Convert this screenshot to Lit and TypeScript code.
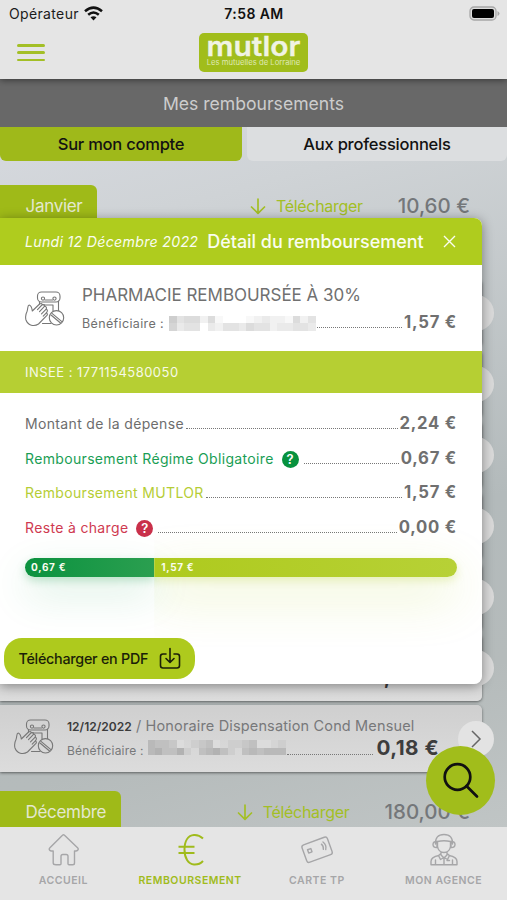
import { LitElement, html, css, svg } from "lit";
import { customElement, property } from "lit/decorators.js";

const pharmacyIcon = svg`
  <rect x="12.500" y="2" width="22.500" height="10" rx="4"/>
  <path d="M14.500 12v2M33.500 11v9.500M18 15h10v6"/>
  <circle cx="18" cy="8.600" r="1.600"/><circle cx="29.500" cy="8.600" r="1.600"/>
  <path d="M20 10h7.500M17.500 33.500h8.500"/>
  <path d="M7.300 21C7 18.500 6.200 15.500 4.200 15 2.200 15.500 3.200 18.500 2 21.500.5 24.500.3 27.500 1 30c2 5.500 8 7 12.500 4l8.200-8.300q1.500-2-.3-2.800l.5-.8q1.200-2.100-.7-3 .9-2.200-1.500-2.900.2-2-2.300-1.700-.9-1.800-2.800-.5z"/>
  <path d="M17.400 14.500l-4.900 5.200M19.700 16.200l-5.200 5.500M21.200 19.100l-4.700 4.800M21.400 22.900l-3.200 3.200"/>
  <circle cx="31.500" cy="27.800" r="7.200"/>
  <path d="M27 23.400l9.600 8M26 25l9.500 8"/>`;

@customElement("mosaic-strip")
class MosaicStrip extends LitElement {
  @property({ attribute: false }) shades: string[] = [];
  @property({ type: Number }) width = 147;
  static styles = css`
    :host { display: block; flex: none; }
    .grid { display: flex; flex-direction: column; height: 15px; }
    .line { display: flex; flex: 1; }
    .cell { flex: 1; }
  `;
  render() {
    return html`<div class="grid" style="width:${this.width}px">
      ${this.shades.map((row) => html`<div class="line">
        ${[...row].map((c) => {
          const v = parseInt(c, 16) * 7 + 150;
          return html`<div class="cell" style="background:${c === "." ? "transparent" : `rgb(${v},${v},${v})`}"></div>`;
        })}
      </div>`)}
    </div>`;
  }
}

@customElement("nav-tab")
class NavTab extends LitElement {
  @property() label = "";
  @property() icon = "";
  @property({ type: Boolean, reflect: true }) active = false;
  static styles = css`
    :host { display: flex; flex: 1; flex-direction: column; align-items: center; color: #a6a6a8; padding-top: 5px; }
    :host([active]) { color: #a0bb1c; }
    svg { width: 36px; height: 36px; fill: none; stroke: currentColor; stroke-width: 1.400; stroke-linecap: round; stroke-linejoin: round; }
    .label { font-size: 10.500px; font-weight: 600; letter-spacing: 0.520px; line-height: 14px; margin-top: 6px; white-space: nowrap; }
  `;
  glyph() {
    switch (this.icon) {
      case "home":
        return svg`<path d="M17.500 3.200q1-.9 2 0L32.800 16q1 1 .1 2-.9 1-2 1h-1.400v12q0 1.800-1.800 1.800h-3.700q-1 0-1-1v-7.500q0-1.800-1.800-1.800h-3.400q-1.800 0-1.800 1.800v7.500q0 1-1 1h-4Q8.200 32.800 8.200 31V19H6.500q-1.200 0-2-1-.8-1 .2-2z"/>`;
      case "euro":
        return svg`<path stroke-width="2" stroke-linecap="butt" d="M31 6.500C28 3.700 25 2.800 22 3c-6 .4-9.500 6-9.500 14.800S16.500 32 22 32.500c3.500.2 6.500-.8 9-3.500M6.500 14.700h16M6.500 21h16"/>`;
      case "card":
        return svg`<g transform="rotate(-20 18 17.500)"><rect x="4.500" y="8.500" width="27" height="18.500" rx="2.500"/><path d="M9 14.500h3.500V18H9zM24 14q1.500 2.500 0 5.500M26.200 12.500q2.600 4 0 8"/></g>`;
      default:
        return svg`<path d="M9.500 12q-.5-9.500 8.500-9.500T26.500 12M11.500 9.500q6.500-1.500 13 0M11.500 10v4.500q1 6 6.500 6t6.500-6V10M11 9.500q-4-.2-4 3t4 3zM25 9.500q4-.2 4 3t-4 3zM15 20v3l3 3 3-3v-3M15 21.500l-2.500 2 2 4 3.500-2 3.500 2 2-4-2.500-2M13 23.500q-8 1.500-8 6v3.200h26v-3.200q0-4.500-8-6M18 26v6.500M9.500 28v4.500M26.500 28v4.500M21 28.500h2.500"/>`;
    }
  }
  render() {
    return html`<svg viewBox="0 0 36 36">${this.glyph()}</svg><span class="label">${this.label}</span>`;
  }
}

@customElement("amount-row")
class AmountRow extends LitElement {
  @property() label = "";
  @property() value = "";
  @property() tone = "plain";
  @property({ type: Boolean }) help = false;
  static styles = css`
    :host { display: block; height: 34.700px; }
    .row { display: flex; align-items: baseline; line-height: 20px; }
    .label { font-size: 14px; letter-spacing: 0.340px; white-space: nowrap; }
    .plain { color: #6d6d6d; }
    .green { color: #1a9e55; }
    .lime { color: #b5cd35; }
    .red { color: #cf3a50; }
    .badge { width: 17px; height: 17px; margin-left: 8px; border-radius: 50%; color: #fff; font-size: 13px; font-weight: 600; line-height: 17px; text-align: center; }
    .badge.green { background: #07923e; color: #fff; }
    .badge.red { background: #c9304a; color: #fff; }
    .leader { flex: 1; border-bottom: 1px dotted #777; margin: 0 2px; }
    .help + .leader { margin-left: 5px; }
    .value { font-size: 16.700px; font-weight: 700; letter-spacing: 0.750px; color: #707070; }
  `;
  render() {
    return html`<div class="row">
      <span class="label ${this.tone}">${this.label}</span>
      ${this.help ? html`<span class="badge help ${this.tone}">?</span>` : ""}
      <span class="leader"></span><span class="value">${this.value}</span>
    </div>`;
  }
}

@customElement("month-header")
class MonthHeader extends LitElement {
  @property() month = "";
  @property() total = "";
  static styles = css`
    :host { display: flex; height: 40px; width: 470px; align-items: center; }
    .tag { display: flex; align-items: center; height: 40px; box-sizing: border-box; padding: 2px 15px 0 25.500px; background: #9fba18; border-radius: 0 6px 0 0; color: #e4e8d0; font-size: 17px; letter-spacing: -0.300px; }
    .dl { display: flex; align-items: center; gap: 9.500px; margin-left: auto; padding-top: 1px; color: #a3bf25; font-size: 16px; letter-spacing: -0.300px; }
    svg { width: 16px; height: 18px; fill: none; stroke: currentColor; stroke-width: 1.700; stroke-linecap: round; stroke-linejoin: round; }
    .total { margin-left: 35px; padding-top: 1px; color: #74777a; font-size: 20.500px; font-weight: 500; }
  `;
  render() {
    return html`<div class="tag">${this.month}</div>
      <div class="dl"><svg viewBox="0 0 16 18"><path d="M8 2v14M1.500 10L8 16.300 14.500 10"/></svg><span>Télécharger</span></div>
      <div class="total">${this.total}</div>`;
  }
}

@customElement("app-root")
class AppRoot extends LitElement {
  static styles = css`
    :host { display: block; font-family: Inter, "Liberation Sans", sans-serif; }
    .screen { position: relative; display: flex; flex-direction: column; width: 507px; height: 900px; overflow: hidden; background: #c4c9cb; }
    .top { position: relative; z-index: 1; height: 79px; flex: none; background: #e5e5e5; box-shadow: 0 1px 7px rgba(0,0,0,.5); }
    .status { display: grid; grid-template-columns: 1fr auto 1fr; align-items: center; height: 28px; padding: 0 7px 0 9px; font-size: 14px; color: #1b1b1b; }
    .carrier { display: flex; align-items: center; gap: 5px; letter-spacing: 0.350px; }
    .carrier, .time { margin-top: -1px; }
    .wifi { width: 19px; height: 15px; margin-top: -1px; }
    .time { font-weight: 600; color: #111; letter-spacing: 0.400px; padding-right: 1px; }
    .battery { justify-self: end; width: 31px; height: 15px; margin-top: -2px; }
    .brand { display: grid; grid-template-columns: 1fr auto 1fr; align-items: start; padding: 5px 17px 0 17px; }
    .burger { display: flex; flex-direction: column; gap: 4.500px; width: 28px; padding-top: 11px; }
    .burger i { height: 2.800px; border-radius: 2px; background: #a3bf26; }
    .logo { width: 109px; height: 39px; border-radius: 5px; background: #a1bd1b; color: #f0f3e4; text-align: center; white-space: nowrap; }
    .word { display: block; font-size: 26.500px; font-weight: 600; line-height: 24px; height: 24px; padding-top: 1px; transform: scaleX(1.130); -webkit-text-stroke: 0.300px #f0f3e4; stroke-linejoin: round; }
    .tagline { display: block; font-size: 7.700px; line-height: 9px; color: #dfe8b4; }
    .title { height: 48px; flex: none; box-sizing: border-box; padding-top: 1px; background: #686868; color: #cdcdcd; display: flex; align-items: center; justify-content: center; font-size: 17.600px; }
    .content { flex: 1; overflow: hidden; background: linear-gradient(165deg, #d6d9df 0%, #cfd3d6 15%, #b3babb 60%, #b5bbbb 80%, #c0c5c5 100%); }
    .switch { display: grid; grid-template-columns: 242px 1fr; gap: 5px; height: 34px; }
    .switch div { display: flex; align-items: center; justify-content: center; font-size: 16.500px; font-weight: 500; color: #121212; letter-spacing: -0.230px; }
    .switch .on { background: #9fb91a; border-radius: 0 0 6px 6px; }
    .switch .off { background: #dcdee0; border-radius: 0 0 6px 6px; }
    .january { margin-top: 24px; }
    .cards { display: flex; flex-direction: column; gap: 4px; margin-top: 54px; }
    .card { position: relative; width: 482px; height: 67px; box-sizing: border-box; border-radius: 0 5px 5px 0; background: linear-gradient(#cfcfcf, #dcdcdc); box-shadow: 0 1px 3px rgba(0,0,0,.5); display: flex; padding: 12px 43px 0 14px; color: #77787a; }
    .go { position: absolute; left: 458px; top: 16px; width: 36px; height: 36px; border-radius: 50%; background: #dadada; display: grid; place-items: center; }
    .card:last-child .go { background: #e3e3e3; }
    .go svg { width: 12px; height: 20px; fill: none; stroke: #666; stroke-width: 1.500; }
    .pill { width: 40px; height: 38px; flex: none; fill: none; stroke: #777; stroke-width: 1.100; stroke-linejoin: round; stroke-linecap: round; }
    .card .pill { margin-top: 1px; }
    .info { flex: 1; margin-left: 13px; }
    .act { font-size: 14.500px; line-height: 18px; white-space: nowrap; letter-spacing: 0.150px; }
    .act b { font-size: 12px; font-weight: 600; color: #3b3b3b; letter-spacing: 0.020px; }
    .who { display: flex; align-items: baseline; margin-top: -1px; font-size: 12px; letter-spacing: 0.200px; white-space: nowrap; }
    .who mosaic-strip { margin: 0 1px 0 4px; align-self: center; }
    .leader { flex: 1; border-bottom: 1px dotted #777; }
    .card .sum { margin-left: 3px; font-size: 20.700px; font-weight: 700; color: #3d3d3d; letter-spacing: 0.450px; }
    .december { margin-top: 19px; }
    .nav { display: flex; flex: none; height: 73px; background: #e5e5e5; position: relative; }
    .modal { position: absolute; z-index: 2; left: 0; top: 218px; width: 482px; height: 466px; background: #fff; border-radius: 0 8px 8px 0; overflow: hidden; display: flex; flex-direction: column; }
    .shade { position: absolute; z-index: 1; left: 0; top: 218px; width: 482px; height: 466px; border-radius: 0 8px 8px 0; box-shadow: 0 2px 12px rgba(0,0,0,.4); }
    .mhead { display: flex; align-items: center; height: 47px; flex: none; padding: 0 26px 0 25px; background: #afcc1e; color: #fafdf0; white-space: nowrap; }
    .date { font-size: 14.200px; font-style: italic; letter-spacing: 0.270px; }
    .mtitle { margin-left: 9px; font-size: 18px; font-weight: 500; letter-spacing: -0.050px; }
    .close { margin-left: auto; width: 13px; height: 13px; stroke: #fafdf0; stroke-width: 1.400; margin-top: -1px; }
    .care { display: flex; height: 86px; flex: none; box-sizing: border-box; padding: 19px 25px 0; color: #707070; }
    .care .pill { margin-top: 6px; }
    .care .info { margin-left: 17px; }
    .care .act { font-size: 17px; line-height: 22px; letter-spacing: -0.020px; }
    .care .who { margin-top: 4px; font-size: 12.500px; line-height: 24px; letter-spacing: 0.360px; }
    .care mosaic-strip { margin-left: 5px; }
    .care .sum { margin-left: 2px; font-size: 16.700px; font-weight: 700; letter-spacing: 0.750px; }
    .insee { display: flex; align-items: center; height: 42px; flex: none; padding-left: 25px; background: #b6cf33; color: #f7fae6; font-size: 13px; letter-spacing: 0.460px; }
    .rows { padding: 20px 25px 0; height: 145px; box-sizing: content-box; }
    .bar { display: flex; width: 432px; height: 19px; margin-left: 25px; flex: none; border-radius: 10px; color: #fafdf0; font-size: 10px; font-weight: 700; letter-spacing: 0.700px; line-height: 19px; }
    .bar .ro { box-sizing: border-box; padding-left: 6px; border-radius: 10px 0 0 10px; background: linear-gradient(90deg, #0b923f, #2b9f50); box-shadow: 0 4px 8px rgba(30,160,80,.25), 0 16px 40px rgba(30,160,80,.2); }
    .bar .mu { position: relative; flex: 1; padding-left: 7px; border-radius: 0 10px 10px 0; background: linear-gradient(90deg, #aeca1d, #b7d136); box-shadow: 0 4px 8px rgba(180,208,40,.25), 0 18px 50px rgba(180,208,40,.3); clip-path: inset(-60px -80px -100px 0); }
    .pdf { display: flex; align-items: center; width: 191px; height: 41px; box-sizing: border-box; position: relative; margin: auto 0 5px 4px; padding: 0 14px 0 14.500px; border-radius: 18px; background: #aeca1d; color: #1b1f08; font-size: 14.300px; font-weight: 500; letter-spacing: -0.250px; justify-content: space-between; white-space: nowrap; }
    .pdf svg { width: 22px; height: 23px; fill: none; stroke: #1b1f08; stroke-width: 1.600; stroke-linecap: round; stroke-linejoin: round; }
    .search { position: absolute; z-index: 3; left: 426px; top: 746px; width: 69px; height: 69px; border-radius: 50%; background: #a1bd1b; display: grid; place-items: center; }
    .search svg { width: 38px; height: 38px; fill: none; stroke: #111; stroke-width: 2.700; stroke-linecap: round; }
  `;

  card(date: string, act: string, sum: string) {
    return html`<div class="card">
      <svg class="pill" viewBox="0 0 40 38">${pharmacyIcon}</svg>
      <div class="info">
        <div class="act"><b>${date}</b> / ${act}</div>
        <div class="who"><span>Bénéficiaire :</span>
          <mosaic-strip .width=${138} .shades=${["5667a.876a.8876aa98", "546648.65468.656555"]}></mosaic-strip>
          <span class="leader"></span><span class="sum">${sum}</span></div>
      </div>
      <div class="go"><svg viewBox="0 0 12 20"><path d="M2 2l8 8-8 8"/></svg></div>
    </div>`;
  }

  render() {
    return html`<div class="screen">
      <header class="top">
        <div class="status">
          <div class="carrier"><span>Opérateur</span>
            <svg class="wifi" viewBox="0 0 19 15"><g fill="none" stroke="#111" stroke-width="2.500"><path d="M1 5.300q8.500-7.400 17 0M4.200 8.800q5.300-4.600 10.600 0"/></g><path fill="#111" d="M6.500 11.300q3-2.300 6 0l-3 3.200z"/></svg>
          </div>
          <div class="time">7:58 AM</div>
          <svg class="battery" viewBox="0 0 31 15"><rect x="1" y="1" width="26" height="13" rx="4" fill="#ddd" stroke="#a7a7a7" stroke-width="1.300"/><rect x="3" y="3" width="22" height="9" rx="2" fill="#000"/><path d="M28.500 5v5q2-1 2-2.500T28.500 5z" fill="#a7a7a7"/></svg>
        </div>
        <div class="brand">
          <div class="burger"><i></i><i></i><i></i></div>
          <div class="logo"><span class="word">mutlor</span><span class="tagline">Les mutuelles de Lorraine</span></div>
        </div>
      </header>
      <div class="title">Mes remboursements</div>
      <main class="content">
        <div class="switch"><div class="on">Sur mon compte</div><div class="off">Aux professionnels</div></div>
        <month-header class="january" month="Janvier" total="10,60 €"></month-header>
        <div class="cards">
          ${[0, 1, 2, 3, 4].map(() => html`<div class="card"><div class="go"></div></div>`)}
          ${this.card("12/12/2022", "Pharmacie", "0,90 €")}
          ${this.card("12/12/2022", "Honoraire Dispensation Cond Mensuel", "0,18 €")}
        </div>
        <month-header class="december" month="Décembre" total="180,00 €"></month-header>
      </main>
      <nav class="nav">
        <nav-tab icon="home" label="ACCUEIL"></nav-tab>
        <nav-tab icon="euro" label="REMBOURSEMENT" active></nav-tab>
        <nav-tab icon="card" label="CARTE TP"></nav-tab>
        <nav-tab icon="agent" label="MON AGENCE"></nav-tab>
      </nav>
      <div class="shade"></div>
      <section class="modal">
        <div class="mhead"><span class="date">Lundi 12 Décembre 2022</span><span class="mtitle">Détail du remboursement</span>
          <svg class="close" viewBox="0 0 13 13"><path d="M1 1l11 11M12 1L1 12"/></svg></div>
        <div class="care"><svg class="pill" viewBox="0 0 40 38">${pharmacyIcon}</svg>
          <div class="info">
            <div class="act">PHARMACIE REMBOURSÉE À 30%</div>
            <div class="who"><span>Bénéficiaire :</span>
              <mosaic-strip .width=${147} .shades=${["8baadaefffedcddeadb", "9cbbfcdbbcabbdccbbc"]}></mosaic-strip>
              <span class="leader"></span><span class="sum">1,57 €</span></div>
          </div>
        </div>
        <div class="insee">INSEE : 1771154580050</div>
        <div class="rows">
          <amount-row label="Montant de la dépense" value="2,24 €"></amount-row>
          <amount-row label="Remboursement Régime Obligatoire" value="0,67 €" tone="green" help></amount-row>
          <amount-row label="Remboursement MUTLOR" value="1,57 €" tone="lime"></amount-row>
          <amount-row label="Reste à charge" value="0,00 €" tone="red" help></amount-row>
        </div>
        <div class="bar"><div class="ro" style="width:${(0.67 / 2.24) * 100}%">0,67 €</div><div class="mu">1,57 €</div></div>
        <div class="pdf"><span>Télécharger en PDF</span><svg viewBox="0 0 22 23"><path d="M7 7H4Q1.500 7 1.500 9.500v9Q1.500 21 4 21h14q2.500 0 2.500-2.500v-9Q20.500 7 18 7h-3M11 1.500V15M7 11.500l4 4 4-4"/></svg></div>
      </section>
      <div class="search"><svg viewBox="0 0 38 38"><circle cx="15.500" cy="15" r="12.800"/><path d="M24.500 24L35 34.500"/></svg></div>
    </div>`;
  }
}
